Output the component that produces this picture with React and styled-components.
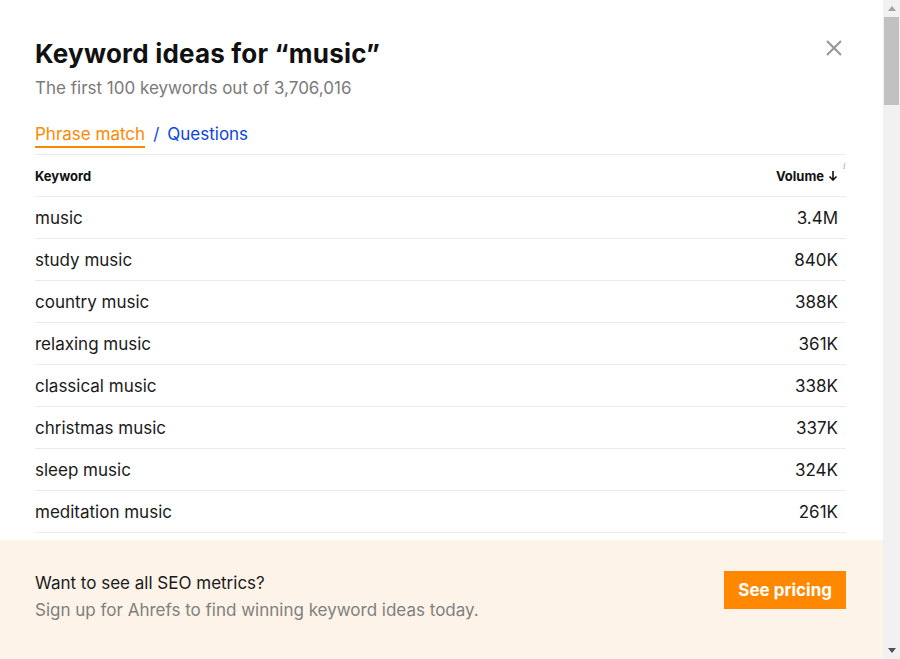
import React from "react";
import styled, { createGlobalStyle } from "styled-components";

const GlobalStyle = createGlobalStyle`
  html, body {
    margin: 0;
    padding: 0;
    background: #fff;
    font-family: Inter, "Noto Sans", sans-serif;
    color: #1a1a1a;
  }
  * { box-sizing: border-box; }
`;

const Frame = styled.div`
  display: flex;
  height: 100vh;
  overflow: hidden;
`;

const Modal = styled.div`
  flex: 1;
  display: flex;
  flex-direction: column;
  min-width: 0;
`;

const Body = styled.div`
  padding: 38px 37px 0 35px;
`;

const HeadRow = styled.div`
  display: flex;
  justify-content: space-between;
  align-items: flex-start;
`;

const Title = styled.h1`
  margin: 0;
  font-size: 26px;
  font-weight: 700;
  line-height: 32px;
  letter-spacing: 0.2px;
  color: #111;
`;

const Subtitle = styled.p`
  margin: 7px 0 0;
  font-size: 17px;
  line-height: 22px;
  color: #7a7a7a;
`;

const Close = styled.button`
  border: 0;
  background: none;
  padding: 0;
  margin: -2px 0 0 0;
  width: 24px;
  height: 24px;
  cursor: pointer;
  display: flex;
  align-items: center;
  justify-content: center;
`;

const Tabs = styled.div`
  display: flex;
  align-items: flex-start;
  gap: 8px;
  margin-top: 24px;
  padding-bottom: 6px;
  border-bottom: 1px solid #ebebeb;
  font-size: 17px;
  line-height: 22px;
`;

const Tab = styled.a`
  color: ${(p) => (p.$active ? "#ff8800" : "#0a46e0")};
  border-bottom: ${(p) => (p.$active ? "2px solid #ff8800" : "2px solid transparent")};
  padding-bottom: 1px;
  cursor: pointer;
  text-decoration: none;
`;

const Sep = styled.span`
  color: #0a46e0;
`;

const Table = styled.div`
  display: flex;
  flex-direction: column;
`;

const HeaderRow = styled.div`
  display: flex;
  justify-content: space-between;
  align-items: center;
  height: 42px;
  border-bottom: 1px solid #ebebeb;
  font-size: 13px;
  font-weight: 700;
  color: #111;
`;

const Row = styled.div`
  display: flex;
  justify-content: space-between;
  align-items: center;
  height: 42px;
  border-bottom: 1px solid #ebebeb;
  font-size: 17px;
  color: #1a1a1a;
`;

const Num = styled.span`
  padding-right: 8px;
`;

const VolHead = styled.span`
  display: flex;
  align-items: center;
  gap: 4px;
  position: relative;
  padding-right: 8px;
`;

const Info = styled.span`
  position: absolute;
  right: 0;
  top: -7px;
  font-size: 9px;
  font-weight: 400;
  font-style: italic;
  color: #aaa;
  font-family: "DejaVu Serif", serif;
`;

const Footer = styled.div`
  flex: 1;
  background: #fdf3e8;
  display: flex;
  align-items: center;
  justify-content: space-between;
  padding: 0 37px 7px 35px;
  margin-top: 7px;
`;

const FooterText = styled.div`
  display: flex;
  flex-direction: column;
  gap: 5px;
`;

const FooterTitle = styled.div`
  font-size: 17px;
  line-height: 22px;
  color: #1a1a1a;
`;

const FooterSub = styled.div`
  font-size: 17px;
  line-height: 22px;
  color: #7f7f7f;
`;

const PricingButton = styled.button`
  background: #ff8800;
  color: #fff;
  border: 0;
  height: 38px;
  padding: 0 14px;
  font-family: Inter, "Noto Sans", sans-serif;
  font-size: 17px;
  font-weight: 700;
  cursor: pointer;
  margin-top: -13px;
`;

const Scrollbar = styled.div`
  width: 17px;
  background: #f1f1f1;
  display: flex;
  flex-direction: column;
  align-items: center;
`;

const Arrow = styled.div`
  width: 17px;
  height: 17px;
  display: flex;
  align-items: center;
  justify-content: center;
`;

const Thumb = styled.div`
  width: 15px;
  height: 88px;
  background: #c1c1c1;
`;

const Spacer = styled.div`
  flex: 1;
`;

const rows = [
  ["music", "3.4M"],
  ["study music", "840K"],
  ["country music", "388K"],
  ["relaxing music", "361K"],
  ["classical music", "338K"],
  ["christmas music", "337K"],
  ["sleep music", "324K"],
  ["meditation music", "261K"],
];

export default function App() {
  return (
    <>
      <GlobalStyle />
      <Frame>
        <Modal>
          <Body>
            <HeadRow>
              <div>
                <Title>Keyword ideas for “music”</Title>
                <Subtitle>The first 100 keywords out of 3,706,016</Subtitle>
              </div>
              <Close aria-label="Close">
                <svg width="18" height="18" viewBox="0 0 18 18">
                  <path d="M2 2L16 16M16 2L2 16" stroke="#999" strokeWidth="2.2" />
                </svg>
              </Close>
            </HeadRow>
            <Tabs>
              <Tab $active>Phrase match</Tab>
              <Sep>/</Sep>
              <Tab>Questions</Tab>
            </Tabs>
            <Table>
              <HeaderRow>
                <span>Keyword</span>
                <VolHead>
                  Volume
                  <svg width="10" height="11" viewBox="0 0 10 11">
                    <path d="M5 1V10M1.5 6.5L5 10L8.5 6.5" stroke="#111" strokeWidth="1.6" fill="none" />
                  </svg>
                  <Info>i</Info>
                </VolHead>
              </HeaderRow>
              {rows.map(([k, v]) => (
                <Row key={k}>
                  <span>{k}</span>
                  <Num>{v}</Num>
                </Row>
              ))}
            </Table>
          </Body>
          <Footer>
            <FooterText>
              <FooterTitle>Want to see all SEO metrics?</FooterTitle>
              <FooterSub>Sign up for Ahrefs to find winning keyword ideas today.</FooterSub>
            </FooterText>
            <PricingButton>See pricing</PricingButton>
          </Footer>
        </Modal>
        <Scrollbar>
          <Arrow>
            <svg width="8" height="5" viewBox="0 0 8 5">
              <path d="M0 5L4 0L8 5Z" fill="#a3a3a3" />
            </svg>
          </Arrow>
          <Thumb />
          <Spacer />
          <Arrow>
            <svg width="8" height="5" viewBox="0 0 8 5">
              <path d="M0 0L4 5L8 0Z" fill="#505050" />
            </svg>
          </Arrow>
        </Scrollbar>
      </Frame>
    </>
  );
}
